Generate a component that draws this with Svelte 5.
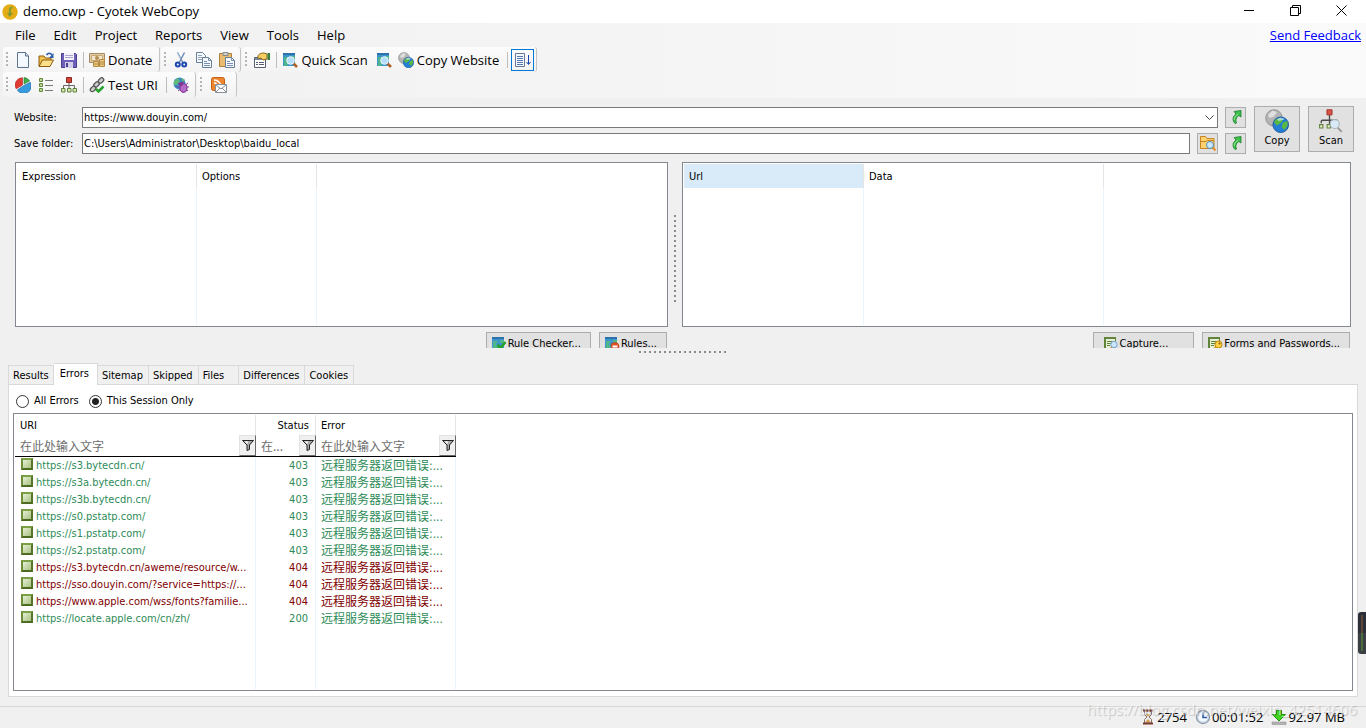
<script lang="ts">
  const menus = ["File", "Edit", "Project", "Reports", "View", "Tools", "Help"];

  type Item = { icon?: string; label?: string; title?: string; sep?: boolean; active?: boolean; wide?: boolean };

  const toolRows: Item[][][] = [
    [
      [
        { icon: "new", title: "New" },
        { icon: "open", title: "Open" },
        { icon: "save", title: "Save" },
        { sep: true },
        { icon: "donate", label: "Donate" },
      ],
      [
        { icon: "cut", title: "Cut" },
        { icon: "copy", title: "Copy" },
        { icon: "paste", title: "Paste" },
      ],
      [
        { icon: "properties", title: "Project Properties" },
        { sep: true },
        { icon: "scan", label: "Quick Scan" },
        { icon: "scan", title: "Scan Website" },
        { icon: "globes", label: "Copy Website" },
        { sep: true },
        { icon: "follow", title: "Auto Scroll", active: true },
      ],
    ],
    [
      [
        { icon: "pie", title: "Statistics" },
        { icon: "list", title: "Link Map" },
        { icon: "sitemap", title: "Sitemap" },
        { sep: true },
        { icon: "chain", label: "Test URI" },
        { sep: true },
        { icon: "bug", title: "User Agent" },
      ],
      [{ icon: "rss", title: "Newsletter", wide: true }],
    ],
  ];

  const tabs = ["Results", "Errors", "Sitemap", "Skipped", "Files", "Differences", "Cookies"];
  let activeTab = $state("Errors");
  let scope = $state("session");
  let saveFolder = $state("C:\\Users\\Administrator\\Desktop\\baidu_local");

  const hint = "在此处输入文字";
  const message = "远程服务器返回错误:...";
  const errors = [
    { uri: "https://s3.bytecdn.cn/", status: 403 },
    { uri: "https://s3a.bytecdn.cn/", status: 403 },
    { uri: "https://s3b.bytecdn.cn/", status: 403 },
    { uri: "https://s0.pstatp.com/", status: 403 },
    { uri: "https://s1.pstatp.com/", status: 403 },
    { uri: "https://s2.pstatp.com/", status: 403 },
    { uri: "https://s3.bytecdn.cn/aweme/resource/w...", status: 404 },
    { uri: "https://sso.douyin.com/?service=https://...", status: 404 },
    { uri: "https://www.apple.com/wss/fonts?familie...", status: 404 },
    { uri: "https://locate.apple.com/cn/zh/", status: 200 },
  ];
</script>

{#snippet icon(name: string, size = 16)}
  <svg class="icon" width={size} height={size} viewBox="0 0 16 16" aria-hidden="true">
    {#if name === "new"}
      <path d="M2.5 .5h8l3 3.500v11.500h-11z" fill="#f4f9ff" stroke="#5b7590" />
      <path d="M10.500 .5v3.500h3" fill="#c9dcf0" stroke="#5b7590" />
    {:else if name === "open"}
      <path d="M1 14V4h5l1.500 2H13v3" fill="#f0c050" stroke="#8a5a10" />
      <path d="M1 14.500L4.500 8H15.500L12 14.500z" fill="#ffe08a" stroke="#8a5a10" />
      <path d="M8.500 3c1.500-2.500 4-2.500 5.500 0" fill="none" stroke="#2b5eb0" stroke-width="1.500" />
      <path d="M15.500 1v5h-4.500z" fill="#2b5eb0" />
    {:else if name === "save"}
      <path d="M.5 1.500h14l1 1v13h-15z" fill="#6e5fb8" stroke="#4c3f92" />
      <path d="M3 1h10v7H3z" fill="#f4f2fc" />
      <path d="M4 3.500h8M4 5.500h8" stroke="#aaa4cf" />
      <path d="M4 10h8v6H4z" fill="#d4d0ea" />
      <path d="M5 11h2v4H5z" fill="#4c3f92" />
    {:else if name === "donate"}
      <path d="M.5 1.500h15v9H.5z" fill="#e3cda6" stroke="#a58a62" />
      <path d="M2.500 3.500h11v5h-11z" fill="#f3e6cc" stroke="#c4a877" />
      <circle cx="8" cy="6" r="2" fill="#b48c50" />
      <path d="M4.500 9.500h5v5h-5zM10.500 7.500h5v7h-5z" fill="#f0c878" stroke="#b08a48" />
      <path d="M4.500 12h5M10.500 10h5M10.500 12h5" stroke="#b08a48" />
    {:else if name === "cut"}
      <path d="M4.500 .5L9.500 10M11.500 .5L6.500 10" stroke="#6f8db5" stroke-width="1.500" />
      <path d="M4.500 1l3 6" stroke="#dce8f6" stroke-width=".6" />
      <circle cx="4.800" cy="12.500" r="2" fill="none" stroke="#1d49b0" stroke-width="2" />
      <circle cx="11.200" cy="12.500" r="2" fill="none" stroke="#1d49b0" stroke-width="2" />
    {:else if name === "copy"}
      <path d="M.5 .5h6l3 3v7h-9z" fill="#f5f8fc" stroke="#687f9c" />
      <path d="M2 3.500h4M2 5.500h5M2 7.500h5" stroke="#91a5c0" />
      <path d="M6.500 5.500h6l3 3v7h-9z" fill="#f5f8fc" stroke="#687f9c" />
      <path d="M12.500 5.500v3h3M8 9.500h3M8 11.500h6M8 13.500h6" fill="none" stroke="#7890b0" />
    {:else if name === "paste"}
      <path d="M.5 1.500h12v13H.5z" fill="#e9bd70" stroke="#b0803a" />
      <path d="M4 .5h5v3H4z" fill="#d0d0cc" stroke="#888" />
      <path d="M6.500 5.500h6l3 3v7h-9z" fill="#f5f8fc" stroke="#687f9c" />
      <path d="M12.500 5.500v3h3M8 9.500h3M8 11.500h6M8 13.500h6" fill="none" stroke="#7890b0" />
    {:else if name === "properties"}
      <path d="M.5 5.500h11v10H.5z" fill="#fff" stroke="#555e70" />
      <path d="M1 6h10v2H1z" fill="#7890b0" />
      <path d="M2 10.500h2M5 10.500h5M2 12.500h2M5 12.500h5" stroke="#555e70" />
      <path d="M4 5c0-3 3-4 6-4l3 1v5L9 8 7 6 4 7z" fill="#f5cf62" stroke="#8c651a" />
      <path d="M13.500 1h2.500v7h-2.500z" fill="#38803c" />
    {:else if name === "scan" || name === "check" || name === "rules"}
      <path d="M1 1h12v13H1z" fill="#3d93cb" />
      <path d="M1 1h12v2H1z" fill="#2b73aa" />
      <path d="M2 5h5l-2 3 2 3-2 3H2zM9 4h4v3H9z" fill="#4fb58c" />
      {#if name === "scan"}
        <path d="M11.500 11.500l3.500 3.500" stroke="#b06226" stroke-width="2.500" />
        <circle cx="8.500" cy="8.500" r="3.800" fill="#c2e5fc" fill-opacity=".9" stroke="#eef8ff" />
      {:else if name === "check"}
        <path d="M6.500 9l3 3 5-6" fill="none" stroke="#24a128" stroke-width="2.500" />
      {:else}
        <circle cx="11" cy="10.500" r="4" fill="#e25329" stroke="#b8350e" stroke-width=".6" />
        <path d="M8.500 10.500h5" stroke="#fff" stroke-width="2" />
      {/if}
    {:else if name === "globes"}
      <circle cx="6" cy="6" r="5.500" fill="#b4b4b4" stroke="#8d8d8d" stroke-width=".6" />
      <path d="M2 4l3-3 3 1-2 3-3 1z" fill="#dedede" />
      <circle cx="10.500" cy="10.500" r="5.200" fill="#247ed5" stroke="#1d5795" stroke-width=".6" />
      <path d="M7 7l3-1 2 1-1 2-3 2-2-2zM12 9l3-1v3l-2 3-2-2z" fill="#58b83f" />
      <path d="M8 7c2-2 4-1 5 0l-4 1z" fill="#cdeffc" fill-opacity=".7" />
    {:else if name === "follow"}
      <path d="M.5 1.500h9v13h-9z" fill="#f5f8fc" stroke="#66799d" />
      <path d="M2 4.500h6M2 6.500h6M2 8.500h6M2 10.500h6M2 12.500h6" stroke="#5876b2" />
      <path d="M13.500 3v9M11.500 10l2 2.500 2-2.500" fill="none" stroke="#1a46af" />
    {:else if name === "pie"}
      <path d="M7.500 8V.7A7.300 7.300 0 0 0 1.200 11.800z" fill="#e23b32" stroke="#a92720" stroke-width=".6" />
      <path d="M9 7V.6A7 7 0 0 1 14.600 4z" fill="#42ad4c" stroke="#257b2e" stroke-width=".6" />
      <path d="M8.500 8.700l6.700-3.500A7.500 7.500 0 0 1 2.300 13z" fill="#369adc" stroke="#2465a1" stroke-width=".6" />
    {:else if name === "list"}
      <path d="M1.500 1.500h3v3h-3zM1.500 6.500h3v3h-3zM1.500 11.500h3v3h-3z" fill="#bad696" stroke="#66883c" />
      <path d="M7 3.500h8M7 8.500h8M7 13.500h8" stroke="#777" />
    {:else if name === "sitemap"}
      <path d="M8 6v5M2.500 11V8.500h11V11" fill="none" stroke="#666" />
      <path d="M5.500 .5h5v5h-5z" fill="#d24439" stroke="#8d2520" />
      <path d="M.5 11.500h3.500v3.500H.5zM6.500 11.500h3.500v3.500H6.500zM12 11.500h3.500v3.500H12z" fill="#d7e8b8" stroke="#61813b" />
    {:else if name === "scanmap"}
      <path d="M7 4v6M1.500 9.500v-1.200c0-.5.300-.8.800-.8h10" fill="none" stroke="#4a4a4a" stroke-width=".9" />
      <path d="M5.300 .5h3.400v3.400H5.300z" fill="#d95448" stroke="#a02a22" stroke-width=".6" />
      <path d="M.4 10.400h2.200v2.200H.4zM5.400 10.400h2.200v2.200H5.400z" fill="#e3efc9" stroke="#61813b" stroke-width=".7" />
      <path d="M12.500 12.500l2.700 2.700" stroke="#999" stroke-width="1.200" />
      <circle cx="10.500" cy="10" r="3" fill="#d8ebf9" fill-opacity=".9" stroke="#a9b3bd" stroke-width=".7" />
    {:else if name === "chain"}
      <g fill="#ccc" stroke="#555" stroke-width="1.300">
        <rect x="9" y="1.500" width="6" height="4" rx="2" transform="rotate(-45 12 3.500)" />
        <rect x="4.500" y="5.500" width="6" height="4" rx="2" transform="rotate(-45 7.500 7.500)" />
        <rect x="1" y="10" width="6" height="4" rx="2" transform="rotate(-45 4 12)" />
      </g>
      <path d="M7 12l2.500 2.500 5-5" fill="none" stroke="#24a128" stroke-width="2.500" />
    {:else if name === "bug"}
      <circle cx="6.500" cy="6.500" r="6" fill="#368bc7" />
      <path d="M1 4l4-3 2 3-3 4H1zM8 1l4 2-2 3z" fill="#5fb978" />
      <path d="M5 6l10 8M5 14l10-8M3.500 10h12.500M10 4v12" stroke="#8b3a9c" />
      <ellipse cx="10.500" cy="11" rx="3.500" ry="4.300" fill="#b46ac7" stroke="#80328f" />
      <circle cx="8" cy="7" r="2" fill="#80328f" />
    {:else if name === "rss"}
      <rect x=".5" y=".5" width="13" height="13" rx="2" fill="#ee8630" stroke="#c56012" />
      <path d="M3 3c4 0 7 3 7 7M3 6c2 0 4 2 4 4" fill="none" stroke="#fff" stroke-width="1.500" />
      <path d="M4.500 7.500h11v8h-11z" fill="#fff" stroke="#888f9a" />
      <path d="M5 8l5 4 5-4M5 15l4-4M15 15l-4-4" fill="none" stroke="#888f9a" />
    {:else if name === "reload"}
      <path d="M7 14.500C4 11 4.500 7.500 8 5.200L6.200 2.500 13 1.500v6.500L10.800 6.500C8 8.500 7.200 11 8.500 14z" fill="#3fc24b" stroke="#17782a" stroke-width=".8" />
      <path d="M6.300 11C5.800 8.500 7.500 6.800 10 5.300" fill="none" stroke="#a9efa5" stroke-width=".8" />
    {:else if name === "browse"}
      <path d="M.5 13.500v-12h5l1.500 2h7v10z" fill="#ffd271" stroke="#c7831d" />
      <path d="M1 6.500h5l1.500-1H14" fill="none" stroke="#c7831d" />
      <path d="M12.500 12.500l3 3" stroke="#e69025" stroke-width="2" />
      <circle cx="10" cy="10" r="3.500" fill="#cce8fb" stroke="#508fbf" />
    {:else if name === "capture" || name === "forms"}
      <path d="M1 1h12v13H1z" fill="#61843a" />
      <path d="M3 3h9v9H3z" fill="#e7f0d6" />
      <path d="M4 5.500h6M4 7.500h4M4 9.500h3" stroke="#61843a" />
      {#if name === "capture"}
        <path d="M9 11l-3 4" stroke="#db8a31" stroke-width="2" />
        <circle cx="11" cy="8.500" r="3.200" fill="#c9e5fa" stroke="#76a7d0" />
      {:else}
        <path d="M9 11l-3 4" stroke="#d39d15" stroke-width="2.500" />
        <circle cx="11.500" cy="8.500" r="3.500" fill="#ffd340" stroke="#bc850c" />
        <circle cx="12.500" cy="7.500" r="1" fill="#8a6008" />
      {/if}
    {:else if name === "hourglass"}
      <path d="M4.500 2h7v3.500L9 8l2.500 2.500V14h-7v-3.500L7 8 4.500 5.500z" fill="#e6edf2" stroke="#8c7167" />
      <path d="M3 .5h10v2H3zM3 13.500h10v2H3z" fill="#7c3a2c" />
      <path d="M6 5h4L8 8zM5.500 13L8 10l2.500 3z" fill="#d99c45" />
    {:else if name === "clock"}
      <circle cx="8" cy="8" r="6.500" fill="#dfebf9" stroke="#8d98a5" stroke-width="1.300" />
      <circle cx="8" cy="8" r="5" fill="#f5faff" stroke="#b7cae2" stroke-width=".6" />
      <path d="M8 3.500V8.500h4" fill="none" stroke="#305aa9" stroke-width="1.500" />
    {:else if name === "download"}
      <path d="M5.500 1.500h5v4h4L8 12 1.500 5.500h4z" fill="#43d51f" stroke="#239310" />
      <path d="M1 13h14v2.500H1z" fill="#b3b3b3" stroke="#888" stroke-width=".5" />
    {/if}
  </svg>
{/snippet}

{#snippet funnel()}
  <button class="filter-btn" aria-label="Filter">
    <svg width="12" height="11" viewBox="0 0 12 11" aria-hidden="true">
      <path d="M.5 .5h11L7.500 5v4.500l-2.500 1V5z" fill="#aaa" stroke="#222" />
      <path d="M2.500 1.500h4L5 4z" fill="#fff" />
    </svg>
  </button>
{/snippet}

<div class="window">
  <header class="titlebar">
    <svg width="16" height="16" viewBox="0 0 16 16" aria-hidden="true">
      <circle cx="8" cy="8" r="7.700" fill="#e4ad16" />
      <path d="M10.500 3.500C8 3 7.500 5 8 7.500v2" fill="none" stroke="#7e9b35" stroke-width="2" />
      <path d="M5 9h6l-3.500 4z" fill="#7e9b35" />
    </svg>
    <span class="title">demo.cwp - Cyotek WebCopy</span>
    <button class="win-btn" aria-label="Minimize">
      <svg width="11" height="11" viewBox="0 0 11 11"><path d="M0 5.500h10" stroke="#000" /></svg>
    </button>
    <button class="win-btn" aria-label="Restore">
      <svg width="11" height="11" viewBox="0 0 11 11">
        <path d="M.5 2.500h8v8h-8zM2.500 2.500v-2h8v8h-2" fill="none" stroke="#000" />
      </svg>
    </button>
    <button class="win-btn" aria-label="Close">
      <svg width="11" height="11" viewBox="0 0 11 11"><path d="M.5 .5l10 10M10.500 .5l-10 10" stroke="#000" /></svg>
    </button>
  </header>

  <div class="bars">
    <nav class="menubar">
      {#each menus as menu}
        <button>{menu}</button>
      {/each}
      <a href="#feedback">Send Feedback</a>
    </nav>
    {#each toolRows as row}
      <div class="toolrow">
        {#each row as strip}
          <div class="strip">
            <span class="grip"></span>
            {#each strip as item}
              {#if item.sep}
                <span class="sep"></span>
              {:else}
                <button
                  class:active={item.active}
                  class:labelled={item.label}
                  class:wide={item.wide}
                  aria-label={item.label ?? item.title}
                >
                  {@render icon(item.icon)}
                  {#if item.label}<span>{item.label}</span>{/if}
                </button>
              {/if}
            {/each}
          </div>
        {/each}
      </div>
    {/each}
  </div>

  <section class="project">
    <div class="fields">
      <div class="field">
        <label for="website">Website:</label>
        <div class="combo">
          <select id="website">
            <option>https://www.douyin.com/</option>
          </select>
          <svg width="9" height="6" viewBox="0 0 9 6" aria-hidden="true"><path d="M.5 .5l4 4 4-4" fill="none" stroke="#444" /></svg>
        </div>
        <button class="square" aria-label="Open website">{@render icon("reload")}</button>
      </div>
      <div class="field">
        <label for="folder">Save folder:</label>
        <input id="folder" type="text" bind:value={saveFolder} />
        <button class="square" aria-label="Browse">{@render icon("browse")}</button>
        <button class="square" aria-label="Open folder">{@render icon("reload")}</button>
      </div>
    </div>
    <button class="big">{@render icon("globes", 24)}<span>Copy</span></button>
    <button class="big">{@render icon("scanmap", 24)}<span>Scan</span></button>
  </section>

  <section class="split">
    <div class="pane">
      <div class="list">
        <table class="rules">
          <thead><tr><th>Expression</th><th>Options</th><th></th></tr></thead>
          <tbody><tr><td></td><td></td><td></td></tr></tbody>
        </table>
      </div>
      <div class="actions">
        <button>{@render icon("check")}Rule Checker...</button>
        <button>{@render icon("rules")}Rules...</button>
      </div>
    </div>
    <div class="v-splitter"></div>
    <div class="pane wide">
      <div class="list">
        <table class="forms">
          <thead><tr><th class="hot">Url</th><th>Data</th><th></th></tr></thead>
          <tbody><tr><td></td><td></td><td></td></tr></tbody>
        </table>
      </div>
      <div class="actions">
        <button class="roomy">{@render icon("capture")}Capture...</button>
        <button>{@render icon("forms")}Forms and Passwords...</button>
      </div>
    </div>
  </section>
  <div class="h-splitter"></div>

  <div class="tabs" role="tablist">
    {#each tabs as tab}
      <button role="tab" class:wide={tab === "Files"} aria-selected={tab === activeTab} onclick={() => (activeTab = tab)}>{tab}</button>
    {/each}
  </div>

  <main class="page">
    <div class="scope">
      <label><input type="radio" value="all" bind:group={scope} />All Errors</label>
      <label><input type="radio" value="session" bind:group={scope} />This Session Only</label>
    </div>
    <div class="list errors">
      <table>
        <thead>
          <tr><th>URI</th><th class="num">Status</th><th>Error</th></tr>
          <tr class="filters">
            {#each ["URI", "Status", "Error"] as column}
              <td>
                <div class="filter">
                  <input type="text" placeholder={column === "Status" ? "在..." : hint} aria-label="Filter {column}" />
                  {@render funnel()}
                </div>
              </td>
            {/each}
          </tr>
        </thead>
        <tbody>
          {#each errors as row}
            <tr class="row" class:missing={row.status === 404}>
              <td><span class="mark"></span>{row.uri}</td>
              <td class="num">{row.status}</td>
              <td class="message">{message}</td>
            </tr>
          {/each}
          <tr><td></td><td></td><td></td></tr>
        </tbody>
      </table>
    </div>
  </main>

  <footer class="statusbar">
    <span>{@render icon("hourglass")}2754</span>
    <span>{@render icon("clock")}00:01:52</span>
    <span>{@render icon("download")}92.97 MB</span>
  </footer>

  <div class="gauge"><i></i></div>
  <div class="watermark">https://blog.csdn.net/weixin_42514606</div>
</div>

<style>
  :global(body) {
    background: #f0f0f0;
  }
  .window {
    --ui: "Open Sans", "Noto Sans", sans-serif;
    position: relative;
    display: flex;
    flex-direction: column;
    min-height: 100vh;
    overflow: hidden;
    background: #f0f0f0;
    color: #000;
    font: 11px/16px "DejaVu Sans Condensed", "Noto Sans CJK SC", sans-serif;
  }
  .window * {
    box-sizing: border-box;
  }
  button {
    font: inherit;
    color: inherit;
    padding: 0;
    margin: 0;
    border: 0;
    background: none;
    white-space: nowrap;
  }
  svg {
    display: block;
    flex: none;
  }
  table {
    border-collapse: separate;
    border-spacing: 0;
    table-layout: fixed;
  }
  th {
    font-weight: normal;
    text-align: left;
  }

  .titlebar {
    display: flex;
    align-items: center;
    height: 23px;
    padding: 0 2px;
    background: #fff;
    font: 13px/18px var(--ui);
  }
  .title {
    flex: 1;
    padding: 0 0 2px 5px;
  }
  .win-btn {
    width: 46px;
    height: 23px;
    display: flex;
    align-items: center;
    justify-content: center;
    padding-bottom: 3px;
  }

  .bars {
    height: 75px;
    background: linear-gradient(90deg, #f0f0f0, #fafafa);
    font: 13px/18px var(--ui);
  }
  .menubar {
    display: flex;
    align-items: center;
    height: 24px;
    padding: 0 5px 0 6px;
  }
  .menubar button {
    padding: 0 9px;
  }
  .menubar a {
    margin-left: auto;
    color: #00f;
  }
  .toolrow {
    display: flex;
    height: 25px;
    padding-left: 3px;
    gap: 1px;
  }
  .strip {
    display: flex;
    align-items: center;
    height: 25px;
    padding: 0 2px 0 3px;
    border-right: 1px solid #c4c4c4;
    border-radius: 3px;
    background: linear-gradient(#fcfcfc, #f3f3f3);
  }
  .grip {
    width: 2px;
    height: 16px;
    margin-right: 3px;
    background: repeating-linear-gradient(#b4b4b4 0 2px, transparent 2px 4px);
  }
  .strip button {
    display: flex;
    align-items: center;
    justify-content: center;
    gap: 3px;
    width: 23px;
    height: 22px;
  }
  .strip button.wide {
    width: 29px;
  }
  .strip button.labelled {
    width: auto;
    padding: 0 5px 0 2px;
  }
  .strip button.active {
    border: 1px solid #0078d7;
  }
  .sep {
    width: 1px;
    height: 16px;
    margin: 0 3px 0 3px;
    background: #bdbdbd;
  }

  .project {
    display: flex;
    gap: 8px;
    padding: 8px 12px 0 14px;
  }
  .fields {
    flex: 1;
    display: flex;
    flex-direction: column;
    gap: 4px;
  }
  .field {
    display: flex;
    align-items: center;
    gap: 7px;
    height: 22px;
  }
  .field label {
    width: 61px;
    padding-top: 2px;
    white-space: nowrap;
  }
  .combo {
    position: relative;
    flex: 1;
  }
  .combo svg {
    position: absolute;
    right: 4px;
    top: 8px;
    pointer-events: none;
  }
  .field select,
  .field > input {
    appearance: none;
    display: block;
    width: 100%;
    height: 21px;
    padding: 1px 1px 0;
    border: 1px solid #7a7a7a;
    border-radius: 0;
    background: #fff;
    color: #000;
    font: inherit;
  }
  .field > input {
    flex: 1;
  }
  .square,
  .big,
  .actions button {
    border: 1px solid #adadad;
    background: #e1e1e1;
  }
  .square {
    display: flex;
    align-items: center;
    justify-content: center;
    width: 21px;
    height: 21px;
    flex: none;
  }
  .big {
    display: flex;
    flex-direction: column;
    align-items: center;
    justify-content: center;
    width: 46px;
    height: 46px;
  }

  .split {
    display: flex;
    height: 194px;
    padding: 8px 15px 0;
    overflow: hidden;
  }
  .pane {
    flex: 653;
    min-width: 0;
  }
  .pane.wide {
    flex: 669;
  }
  .list {
    display: grid;
    border: 1px solid #828790;
    background: #fff;
    padding: 1px;
  }
  .pane .list {
    height: 165px;
  }
  .pane table {
    width: 100%;
  }
  .pane th {
    height: 24px;
    padding: 2px 5px 0;
    border-right: 1px solid #e5e5e5;
  }
  .pane td {
    border-right: 1px solid #ebf4fc;
  }
  .pane th:last-child,
  .pane td:last-child {
    border: 0;
  }
  .pane th.hot {
    background: #d9ebf9;
  }
  .pane th:first-child {
    width: 180px;
  }
  .rules th:nth-child(2) {
    width: 120px;
  }
  .forms th:nth-child(2) {
    width: 240px;
  }
  .actions {
    display: flex;
    justify-content: flex-end;
    gap: 8px;
    padding: 5px 1px 0 0;
  }
  .actions button {
    display: flex;
    align-items: center;
    gap: 1px;
    height: 24px;
    padding: 0 9px 0 4px;
  }
  .actions .roomy {
    padding: 0 25px 0 9px;
  }
  .v-splitter {
    width: 14px;
    height: 88px;
    margin-top: 53px;
    background: repeating-linear-gradient(#8c8c8c 0 2px, transparent 2px 5px) center / 2px 100% no-repeat;
  }
  .h-splitter {
    height: 8px;
    background: repeating-linear-gradient(90deg, #8c8c8c 0 2px, transparent 2px 5px) center / 88px 2px no-repeat;
  }

  .tabs {
    display: flex;
    align-items: flex-end;
    height: 28px;
    padding-left: 8px;
  }
  .tabs button {
    height: 19px;
    padding: 2px 5px 0 4px;
    border: 1px solid #d9d9d9;
    border-width: 1px 1px 0 0;
  }
  .tabs button:first-child {
    padding-right: 4px;
    border-left-width: 1px;
  }
  .tabs button.wide {
    padding-right: 14px;
  }
  .tabs button[aria-selected="true"] {
    position: relative;
    z-index: 1;
    height: 22px;
    margin-bottom: -1px;
    padding: 0 8px 2px 6px;
    background: #fff;
  }
  .page {
    flex: 1;
    display: flex;
    flex-direction: column;
    margin: 0 8px 9px;
    padding: 4px 4px 5px;
    border: 1px solid #d9d9d9;
    background: #fff;
  }
  .scope {
    display: flex;
    align-items: center;
    gap: 10px;
    height: 24px;
    padding-left: 3px;
  }
  .scope label {
    display: flex;
    align-items: center;
    gap: 5px;
  }
  .scope input {
    appearance: none;
    width: 13px;
    height: 13px;
    margin: 0;
    border: 1px solid #333;
    border-radius: 50%;
    background: #fff;
  }
  .scope input:checked {
    background: radial-gradient(circle, #222 0 3px, #fff 4px);
  }

  .errors {
    flex: 1;
    justify-content: start;
  }
  .errors table {
    width: 441px;
  }
  .errors th {
    height: 20px;
    padding: 2px 6px 0 5px;
    border-right: 1px solid #e5e5e5;
  }
  .errors th:nth-child(1) {
    width: 241px;
  }
  .errors th:nth-child(2) {
    width: 60px;
  }
  .errors td {
    padding: 0;
    border-right: 1px solid #ebf4fc;
  }
  .errors .num {
    text-align: right;
  }
  .filters td {
    height: 22px;
    border-bottom: 1px solid #000;
    border-right: 0;
  }
  .filter {
    display: flex;
    align-items: center;
    height: 21px;
  }
  .filter input {
    flex: 1;
    min-width: 0;
    padding: 0 0 0 5px;
    border: 0;
    background: none;
    font: 12px/16px "Noto Sans CJK SC", sans-serif;
    outline: none;
  }
  .filter input::placeholder {
    color: #6d6d6d;
  }
  .filter-btn {
    display: flex;
    align-items: center;
    justify-content: center;
    width: 17px;
    height: 21px;
    flex: none;
    border: 1px solid;
    border-color: #e3e3e3 #696969 #696969 #e3e3e3;
    background: #f0f0f0;
  }
  .errors .row td {
    height: 17px;
    padding-top: 1px;
    line-height: 16px;
    white-space: nowrap;
    overflow: hidden;
    color: #2e8b57;
  }
  .errors .row.missing td {
    color: #800000;
  }
  .errors .row .num {
    padding-right: 7px;
  }
  .errors .row .message {
    padding-left: 5px;
    font-size: 12px;
  }
  .mark {
    display: inline-block;
    width: 12px;
    height: 12px;
    margin: 0 3px 0 6px;
    border: 2px solid;
    border-color: #7ba043 #56752a #4c6a22 #6c8f38;
    background: linear-gradient(135deg, #e6efd8, #a9c27f);
    vertical-align: -1px;
  }

  .statusbar {
    display: flex;
    align-items: center;
    justify-content: flex-end;
    gap: 8px;
    height: 22px;
    padding: 0 21px 2px 0;
    border-top: 1px solid #d7d7d7;
    font: 13px/16px var(--ui);
  }
  .statusbar span {
    display: flex;
    align-items: center;
    gap: 1px;
  }

  .gauge {
    position: absolute;
    right: 0;
    bottom: 74px;
    width: 8px;
    height: 42px;
    padding: 3px 0 3px 3px;
    border-radius: 3px 0 0 3px;
    background: linear-gradient(#2b3038 50%, #3b3f44 50%);
  }
  .gauge i {
    display: block;
    width: 2px;
    height: 36px;
    background: linear-gradient(#5b4638 50%, #4b6c3c 50%);
  }
  .watermark {
    position: absolute;
    right: 9px;
    bottom: 9px;
    font: 15px/20px var(--ui);
    color: rgba(255, 255, 255, 0.6);
    text-shadow: 1px 1px 1px rgba(0, 0, 0, 0.2);
    pointer-events: none;
  }
</style>
